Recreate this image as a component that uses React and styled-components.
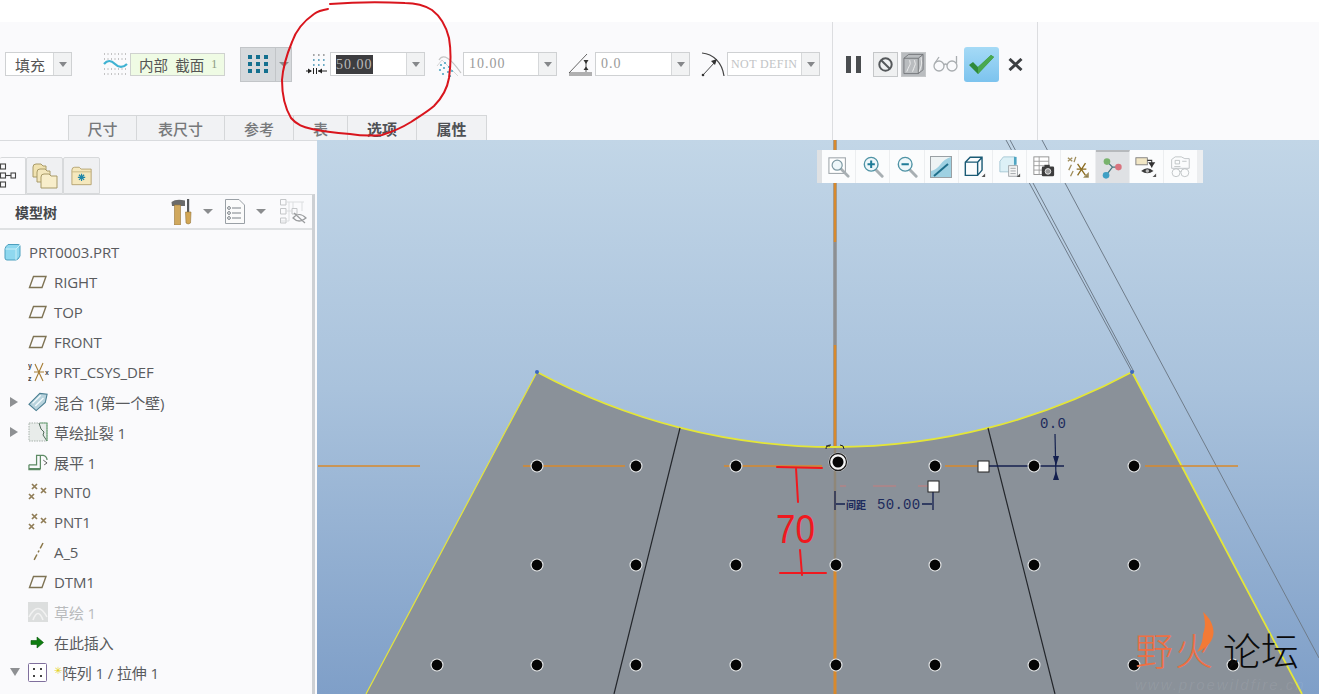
import { createGlobalStyle, styled } from "styled-components";

const CJK = `"Noto Sans CJK SC", "Noto Sans", sans-serif`;
const UI = `"Open Sans", "Noto Sans CJK SC", sans-serif`;
const SERIF = `"Liberation Serif", "Noto Sans CJK SC", serif`;

const Global = createGlobalStyle`
  html, body { margin: 0; padding: 0; background: #fff; }
  body { width: 1319px; height: 694px; overflow: hidden; font-family: ${UI}; }
`;

export default function App() {
    return (
        <Page>
            <Global />
            <Ribbon>
                <RibbonMain>
                    <Controls>
                        <Combo $w={67}><ComboValue $cjk>填充</ComboValue><ComboArrow /></Combo>
                        <IconSlot $ml={31} $w={25}><WaveIcon /></IconSlot>
                        <SectionBox>内部 截面 <SectionNum>1</SectionNum></SectionBox>
                        <GridButton>
                            <GridMain><DotsIcon /></GridMain>
                            <GridDrop><Tri /></GridDrop>
                        </GridButton>
                        <IconSlot $ml={14} $w={22}><SpacingIcon /></IconSlot>
                        <Combo $w={95}><ComboValue><Selected>50.00</Selected></ComboValue><ComboArrow /></Combo>
                        <IconSlot $ml={12} $w={24}><DensityIcon /></IconSlot>
                        <Combo $w={94}><ComboValue>10.00</ComboValue><ComboArrow /></Combo>
                        <IconSlot $ml={11} $w={25}><AngleIcon /></IconSlot>
                        <Combo $w={95}><ComboValue>0.0</ComboValue><ComboArrow /></Combo>
                        <IconSlot $ml={11} $w={24}><RadiusIcon /></IconSlot>
                        <Combo $w={93}><ComboValue $faded>NOT DEFIN</ComboValue><ComboArrow /></Combo>
                    </Controls>
                    <Tabs>
                        <Tab $w={69}>尺寸</Tab>
                        <Tab $w={88}>表尺寸</Tab>
                        <Tab $w={69}>参考</Tab>
                        <Tab $w={54}>表</Tab>
                        <Tab $w={69} $strong>选项</Tab>
                        <Tab $w={70} $strong>属性</Tab>
                    </Tabs>
                </RibbonMain>
                <RibbonActions>
                    <Pause><PauseBar /><PauseBar /></Pause>
                    <ActionBox $ml={12}><StopIcon /></ActionBox>
                    <ActionBox $ml={3} $on><BoxHatchIcon /></ActionBox>
                    <IconSlot $ml={7} $w={25}><GlassesIcon /></IconSlot>
                    <OkButton><CheckIcon /></OkButton>
                    <IconSlot $ml={9} $w={15}><CrossIcon /></IconSlot>
                </RibbonActions>
            </Ribbon>

            <Main>
                <Sidebar>
                    <SideTabs>
                        <SideTab $on $w={26}><TreeTabIcon /></SideTab>
                        <SideTab $w={37}><FoldersIcon /></SideTab>
                        <SideTab $w={37}><FolderStarIcon /></SideTab>
                    </SideTabs>
                    <Panel>
                        <PanelHead>
                            <PanelTitle>模型树</PanelTitle>
                            <PanelTools>
                                <ToolsIcon />
                                <Tri $ml={11} />
                                <ListIcon />
                                <Tri $ml={11} />
                                <TreeEyeIcon />
                            </PanelTools>
                        </PanelHead>
                        <Tree>
                            {treeRows.map((row, i) => (
                                <TreeRow key={i} $root={row.root}>
                                    {!row.root && (
                                        <Twist>{row.twist === "right" ? <TwistRight /> : row.twist === "down" ? <TwistDown /> : null}</Twist>
                                    )}
                                    <RowIcon $root={row.root}>{row.icon}</RowIcon>
                                    <RowLabel $muted={row.muted}>{row.star && <StarMark>✳</StarMark>}{row.label}</RowLabel>
                                </TreeRow>
                            ))}
                        </Tree>
                    </Panel>
                </Sidebar>

                <Viewport>
                    <Drawing />
                    <FloatBar>
                        <Grip />
                        <FloatBtn><RefitIcon /></FloatBtn>
                        <FloatBtn><ZoomIcon plus /></FloatBtn>
                        <FloatBtn><ZoomIcon /></FloatBtn>
                        <FloatBtn><RepaintIcon /></FloatBtn>
                        <FloatBtn><CubeIcon /></FloatBtn>
                        <FloatBtn><ViewMgrIcon /></FloatBtn>
                        <FloatBtn><SnapshotIcon /></FloatBtn>
                        <FloatBtn><DatumIcon /></FloatBtn>
                        <FloatBtn $on><NodesIcon /></FloatBtn>
                        <FloatBtn><AnnotIcon /></FloatBtn>
                        <FloatBtn><FadedPartIcon /></FloatBtn>
                    </FloatBar>
                    <Watermark>
                        <WmOrange>野火</WmOrange>
                        <FlameIcon />
                        <WmBlack>论坛</WmBlack>
                        <WmUrl>www.proewildfire.cn</WmUrl>
                    </Watermark>
                </Viewport>
            </Main>

            <InkLayer viewBox="0 0 1319 694">
                <path d="M328 9 C322 10 318 11 314 14 C304 21 296 30 292 42 C287 54 283 66 282 80 C282 95 285 108 291 118 C297 125 303 127 312 129 C325 132 337 133 350 134 C362 136 372 136 382 135 C395 131 403 127 411 122 C420 116 427 112 434 106 C442 98 447 90 449 78 C451 64 451 50 449 38 C446 26 440 16 432 10 C424 5 415 3 405 3 C385 2 355 2 330 4" fill="none" stroke="#d9151d" strokeWidth="2" strokeLinecap="round" />
                <path d="M777 467 L822 468 M796 468 L798 502 M800 550 L802 575 M780 573 L826 573" fill="none" stroke="#f0191f" strokeWidth="2" strokeLinecap="round" />
                <InkText x="776" y="543" textLength="39" lengthAdjust="spacingAndGlyphs">70</InkText>
            </InkLayer>
        </Page>
    );
}

/* ---------- canvas ---------- */

const rows = [
    { y: 466, xs: [537, 636, 736, 935, 1034, 1134] },
    { y: 565, xs: [537, 636, 736, 836, 935, 1034, 1134] },
    { y: 665, xs: [437, 537, 636, 736, 836, 935, 1034, 1134, 1233] },
];

function Drawing() {
    return (
        <svg width="1002" height="554" viewBox="317 140 1002 554" style={{ display: "block" }}>
            {/* construction lines behind the part */}
            <path d="M1006 140 L1132 372 M1010 140 L1134 372" stroke="#6f7c8a" strokeWidth="1" fill="none" />
            <path d="M1042 140 L1319 658" stroke="#6f7c8a" strokeWidth="1" fill="none" />
            <path d="M835 140 V448" stroke="#8d8f92" strokeWidth="3.5" />
            <path d="M835 140 V242 M835 345 V448" stroke="#d8892c" strokeWidth="2.5" />

            {/* part */}
            <path d="M537 372 A627.5 627.5 0 0 0 1132 372 L1302 694 L366 694 Z" fill="#8a9199" />
            <path d="M366 694 L537 372" fill="none" stroke="#e6e63a" strokeWidth="1.2" />
            <path d="M537 372 A627.5 627.5 0 0 0 1132 372 L1302 694" fill="none" stroke="#e4e638" strokeWidth="1.8" />
            <circle cx="537" cy="372" r="2" fill="#3a68c0" />
            <circle cx="1132" cy="372" r="2" fill="#3a68c0" />

            <path d="M680 428 L614 694 M988 428 L1055 694" stroke="#23262b" strokeWidth="1.2" fill="none" />
            <path d="M835 448 V560" stroke="#8f8778" strokeWidth="2.5" />
            <path d="M835 570 V694" stroke="#d8892c" strokeWidth="3" />

            <path d="M318 466 H420 M523 466 H625 M724 466 H822 M945 466 H983 M1145 466 H1238" stroke="#d8892c" strokeWidth="1.6" fill="none" />
            <path d="M988 466 H1064" stroke="#14204f" strokeWidth="1.5" />

            {rows.map(r => r.xs.map(x => (
                <g key={`${x}-${r.y}`}>
                    <circle cx={x} cy={r.y} r="6.5" fill="#e9ebec" />
                    <circle cx={x} cy={r.y} r="5.4" fill="#050505" />
                </g>
            )))}

            {/* active point */}
            <circle cx="838" cy="462" r="9.5" fill="#f4f4f4" />
            <circle cx="838" cy="462" r="8.5" fill="none" stroke="#1b1b1b" strokeWidth="1.3" />
            <circle cx="838" cy="462" r="5.5" fill="#050505" />
            <path d="M826 449 Q826 445 831 445 M840 445 Q844 445 844 449 M826 446 H830" stroke="#222" strokeWidth="1" fill="none" />

            {/* dimensions */}
            <path d="M840 486 H846 M873 486 H896 M918 486 H928" stroke="#c77d7d" strokeWidth="1" fill="none" />
            <path d="M835 491 V510 M933 492 V510 M836 504 H845 M922 504 H932" stroke="#14204f" strokeWidth="1.3" fill="none" />
            <rect x="928" y="481" width="11" height="11" fill="#fff" stroke="#222" strokeWidth="1" />
            <rect x="978" y="461" width="11" height="11" fill="#fff" stroke="#222" strokeWidth="1" />
            <DimLabel x="846" y="509" $small>间距</DimLabel>
            <DimLabel x="877" y="509">50.00</DimLabel>
            <DimLabel x="1040" y="428">0.0</DimLabel>
            <path d="M1055 434 L1056 479" stroke="#14204f" strokeWidth="1.2" fill="none" />
            <path d="M1053 456 H1059 L1056 466 Z M1053 480 H1059 L1056 471 Z" fill="#14204f" />
        </svg>
    );
}

/* ---------- ribbon icons ---------- */

const WaveIcon = () => (
    <svg width="25" height="24" viewBox="0 0 25 24">
        <path d="M1 2h23M1 7h23M1 17h23M1 22h23" stroke="#8c8c8c" strokeWidth="1" strokeDasharray="1 2.5" />
        <path d="M1 12 Q6 6 12 12 T24 12" fill="none" stroke="#3fb2d2" strokeWidth="2.2" />
    </svg>
);

const DotsIcon = () => (
    <svg width="22" height="22" viewBox="0 0 22 22" fill="#14708f">
        {[2, 9, 16].map(y => [1, 9, 17].map(x => <rect key={`${x}${y}`} x={x} y={y} width="4" height="4" />))}
    </svg>
);

const SpacingIcon = () => (
    <svg width="24" height="22" viewBox="0 0 24 22">
        <path d="M8 2h15" stroke="#888" strokeWidth="1.4" strokeDasharray="1.6 3.4" />
        <path d="M8 7h15M8 12h15" stroke="#3d8fb0" strokeWidth="1.4" strokeDasharray="1.6 3.4" />
        <path d="M1 18h5M13 18h9" stroke="#222" strokeWidth="1" />
        <path d="M7 18l-4-2.6v5.2zM13 18l4-2.6v5.2z" fill="#222" />
        <path d="M8.5 15v6M11.5 15v6" stroke="#222" strokeWidth="1" />
    </svg>
);

const DensityIcon = () => (
    <svg width="26" height="26" viewBox="0 0 26 26">
        <path d="M3 9 Q9 -1 25 22" fill="none" stroke="#c4c4c4" strokeWidth="1.2" />
        <path d="M1 15 L6 9 L22 25" fill="none" stroke="#d6d6d6" strokeWidth="1" />
        {[[5, 14], [9, 12], [4, 19], [8, 17], [13, 16], [7, 23], [12, 21], [16, 20], [14, 25]].map(([x, y]) => (
            <circle key={`${x}${y}`} cx={x} cy={y} r="1.1" fill="#52a7c2" />
        ))}
    </svg>
);

const AngleIcon = () => (
    <svg width="25" height="24" viewBox="0 0 25 24">
        <path d="M1 21 L19 2 M1 21 H24" fill="none" stroke="#555" strokeWidth="0.9" />
        <path d="M1 23 H24" stroke="#555" strokeWidth="0.9" />
        <path d="M18 8 V20" stroke="#333" strokeWidth="0.8" />
        <path d="M15.5 8 h5 l-2.5 4 z M15.5 18 h5 l-2.5 -3.5 z" fill="#333" />
    </svg>
);

const RadiusIcon = () => (
    <svg width="24" height="25" viewBox="0 0 24 25">
        <path d="M1 1 C12 2 21 10 23 24" fill="none" stroke="#444" strokeWidth="1.2" />
        <path d="M2 23 L14 10" stroke="#333" strokeWidth="0.9" />
        <path d="M16 7 L10 9 L14 13 Z" fill="#333" />
        <circle cx="2" cy="23" r="1.3" fill="#333" />
    </svg>
);

const StopIcon = () => (
    <svg width="17" height="17" viewBox="0 0 17 17">
        <circle cx="8.5" cy="8.5" r="6.2" fill="none" stroke="#55585b" strokeWidth="2" />
        <path d="M4.2 4.2 L12.8 12.8" stroke="#55585b" strokeWidth="2" />
    </svg>
);

const BoxHatchIcon = () => (
    <svg width="24" height="24" viewBox="0 0 24 24" fill="none" stroke="#6f7174" strokeWidth="0.9">
        <path d="M2 6 L7 2 H22 V18 L17 22 H2 Z M2 6 H17 V22 M17 6 L22 2" />
        <path d="M5 20 C9 10 9 14 8 8 M11 20 C15 9 14 14 13 8 M18 20 C22 9 20 12 20 5" stroke="#f2f2f2" />
    </svg>
);

const GlassesIcon = () => (
    <svg width="25" height="18" viewBox="0 0 25 18" fill="none" stroke="#a9adb0" strokeWidth="1.3">
        <circle cx="6" cy="11" r="5" />
        <circle cx="19" cy="11" r="5" />
        <path d="M11 10 Q12.5 8 14 10 M2 8 L6 2 M23.5 8 V1" />
    </svg>
);

const CheckIcon = () => (
    <svg width="27" height="21" viewBox="0 0 27 21">
        <path d="M1 11 L5 8 L10 13 L23 1 L26 3 L10 20 Z" fill="#2f8a3b" />
        <path d="M10 13 L23 1 L26 3 L10 20 Z" fill="#4aa84f" />
    </svg>
);

const CrossIcon = () => (
    <svg width="15" height="13" viewBox="0 0 15 13">
        <path d="M1.5 1 L13.5 12 M13.5 1 L1.5 12" stroke="#3c3f42" strokeWidth="3" />
    </svg>
);

/* ---------- side panel icons ---------- */

const TreeTabIcon = () => (
    <svg width="19" height="26" viewBox="0 0 19 26" fill="none" stroke="#444" strokeWidth="1.1">
        <rect x="0.5" y="1" width="5" height="5" />
        <rect x="0.5" y="10" width="5" height="5" />
        <rect x="0.5" y="19" width="5" height="5" />
        <rect x="11" y="10" width="4.5" height="5" />
        <path d="M5.5 12.5 H11" />
    </svg>
);

const FoldersIcon = () => (
    <svg width="26" height="26" viewBox="0 0 26 26">
        <path d="M1 4 Q1 1 4 1 H9 L11 3 H14 V14 H1 Z" fill="#f0e2b0" stroke="#a89a68" />
        <path d="M5 9 Q5 6 8 6 H13 L15 8 H18 V19 H5 Z" fill="#f3e7bd" stroke="#a89a68" />
        <path d="M9 14 Q9 11 12 11 H17 L19 13 H25 V25 H9 Z" fill="#f8eecb" stroke="#a89a68" />
    </svg>
);

const FolderStarIcon = () => (
    <svg width="22" height="21" viewBox="0 0 24 22">
        <path d="M1 5 Q1 2 4 2 H9 L11 4 H22 V21 H1 Z" fill="#f5e8bd" stroke="#b3a270" />
        <path d="M1 7 H22" stroke="#c7b783" />
        <path d="M11.5 9 V17 M7.5 13 H15.5 M8.7 10.2 L14.3 15.8 M14.3 10.2 L8.7 15.8" stroke="#1f86a8" strokeWidth="1.3" />
    </svg>
);

const ToolsIcon = () => (
    <svg width="21" height="26" viewBox="0 0 21 26" style={{ flexShrink: 0 }}>
        <path d="M0.5 3 Q5 -0.5 14 1.5 V7 H1 Z" fill="#6a6a6a" />
        <rect x="3.5" y="6" width="6" height="20" fill="#d0a85e" stroke="#96763a" strokeWidth="0.6" />
        <rect x="16" y="0" width="2.2" height="13" fill="#55585b" />
        <path d="M14.5 13 H20 L19.5 24 Q17 26 15 24 Z" fill="#d2a654" stroke="#96763a" strokeWidth="0.6" />
    </svg>
);

const ListIcon = () => (
    <svg width="20" height="25" viewBox="0 0 20 25" style={{ marginLeft: 12, flexShrink: 0 }}>
        <path d="M0.5 0.5 H14 L19.5 6 V24.5 H0.5 Z" fill="#fbfbfb" stroke="#9aa0a6" />
        <path d="M7 9 H16 M7 14 H16 M7 19 H16" stroke="#7c8288" strokeWidth="1.2" />
        <circle cx="4" cy="9" r="1.4" fill="none" stroke="#7c8288" />
        <circle cx="4" cy="14" r="1.4" fill="none" stroke="#7c8288" />
        <circle cx="4" cy="19" r="1.4" fill="none" stroke="#7c8288" />
    </svg>
);

const TreeEyeIcon = () => (
    <svg width="27" height="25" viewBox="0 0 27 25" fill="none" style={{ marginLeft: 14, flexShrink: 0 }}>
        <path d="M0.5 0.5 H6 V6 H0.5 Z M0.5 9.5 H6 V15 H0.5 Z M0.5 19 H6 V24 H0.5 Z M12 9.5 H17 V15 H12 Z" stroke="#c4c6c8" />
        <path d="M6 3 H24 M6 12 H12 M9 3 V22 H1 M13 3 V9 M22 3 V12" stroke="#dcdee0" />
        <path d="M13 19 Q19 12 26 19 Q19 25 13 19 Z M14 14 L25 24" stroke="#9a9c9e" strokeWidth="1.2" />
    </svg>
);

const PlaneIcon = () => (
    <svg width="20" height="14" viewBox="0 0 20 14">
        <path d="M5.5 1.5 H18 L14 12.5 H1.5 Z" fill="none" stroke="#7e7354" strokeWidth="1.4" />
    </svg>
);

const CubeTreeIcon = () => (
    <svg width="17" height="18" viewBox="0 0 17 18">
        <path d="M1 6 Q1 4 4 1.5 H14 Q16 1.5 16 3 V13 Q14 17 12 17 H3 Q1 17 1 15 Z" fill="#8fd8ef" stroke="#4d9fbe" />
        <path d="M1.5 6 H12 V17 M12 6 L16 2" stroke="#c9eff8" fill="none" />
    </svg>
);

const CsysIcon = () => (
    <svg width="21" height="22" viewBox="0 0 21 22" fill="none">
        <path d="M7 3 L15 20 M15 2 L7 20 M6 11 H16" stroke="#a57c33" strokeWidth="1.1" />
        <TinyLabel x="0" y="7">y</TinyLabel>
        <TinyLabel x="0" y="20">z</TinyLabel>
        <TinyLabel x="17" y="14">x</TinyLabel>
    </svg>
);

const BlendIcon = () => (
    <svg width="20" height="20" viewBox="0 0 22 21">
        <path d="M1 13 L13 1 L21 2 L19 11 L9 20 Z" fill="#b8d3dd" stroke="#4b7f92" strokeWidth="1.2" />
        <path d="M5 12 L14 3 M8 15 L17 6" stroke="#f2fafc" strokeWidth="1.5" />
    </svg>
);

const SketchCutIcon = () => (
    <svg width="20" height="20" viewBox="0 0 20 20">
        <path d="M1 1 H19 V19 H1 Z" fill="#e8ecea" stroke="#a8b2ac" strokeDasharray="1.5 1" />
        <path d="M11 1 L13 7 L16 10 L15 13 L19 19" fill="none" stroke="#506a5a" strokeWidth="1" />
        <path d="M12 1 H19 V19" fill="none" stroke="#6ea57a" strokeWidth="1.2" />
    </svg>
);

const FlatIcon = () => (
    <svg width="20" height="18" viewBox="0 0 21 18" fill="none">
        <path d="M1 16 H13 V2 H16 Q20 3 20 7 M1 12 H9 V2 H13" stroke="#5d8a64" strokeWidth="1.3" />
        <path d="M1 12 V17 H13" stroke="#5d8a64" strokeWidth="1.3" />
        <path d="M16 7 L20 10 L17 12" stroke="#555" />
    </svg>
);

const PointsIcon = () => (
    <svg width="20" height="20" viewBox="0 0 20 20" stroke="#907d57" strokeWidth="1.7">
        <path d="M4 2 L9 7 M9 2 L4 7 M13 6 L18 11 M18 6 L13 11 M1 12 L6 17 M6 12 L1 17" />
    </svg>
);

const AxisIcon = () => (
    <svg width="20" height="21" viewBox="0 0 20 21">
        <path d="M15 1 L5 20" stroke="#8a7749" strokeWidth="1.5" strokeDasharray="6 2.5 2 2.5" />
    </svg>
);

const SketchIcon = () => (
    <svg width="20" height="20" viewBox="0 0 20 20">
        <rect width="20" height="20" fill="#dcdede" />
        <path d="M1 15 Q10 -2 19 15 M5 18 Q10 5 15 18" fill="none" stroke="#f2f2f2" strokeWidth="1.6" />
    </svg>
);

const InsertIcon = () => (
    <svg width="16" height="13" viewBox="0 0 16 13">
        <path d="M3 4.5 H9 V1 L15.5 6.5 L9 12 V8.5 H3 Z" fill="#0f7d11" stroke="#0a5b0c" strokeWidth="0.6" />
    </svg>
);

const PatternIcon = () => (
    <svg width="19" height="19" viewBox="0 0 19 19">
        <rect x="0.5" y="0.5" width="18" height="18" rx="1" fill="#fff" stroke="#7f6f9d" />
        {[[5, 5], [12, 5], [5, 12], [12, 12]].map(([x, y]) => <rect key={`${x}${y}`} x={x} y={y} width="2" height="2" fill="#454545" />)}
    </svg>
);

const treeRows = [
    { label: "PRT0003.PRT", icon: <CubeTreeIcon />, root: true },
    { label: "RIGHT", icon: <PlaneIcon /> },
    { label: "TOP", icon: <PlaneIcon /> },
    { label: "FRONT", icon: <PlaneIcon /> },
    { label: "PRT_CSYS_DEF", icon: <CsysIcon /> },
    { label: "混合 1(第一个壁)", icon: <BlendIcon />, twist: "right" },
    { label: "草绘扯裂 1", icon: <SketchCutIcon />, twist: "right" },
    { label: "展平 1", icon: <FlatIcon /> },
    { label: "PNT0", icon: <PointsIcon /> },
    { label: "PNT1", icon: <PointsIcon /> },
    { label: "A_5", icon: <AxisIcon /> },
    { label: "DTM1", icon: <PlaneIcon /> },
    { label: "草绘 1", icon: <SketchIcon />, muted: true },
    { label: "在此插入", icon: <InsertIcon /> },
    { label: "阵列 1 / 拉伸 1", icon: <PatternIcon />, twist: "down", star: true },
];

/* ---------- floating toolbar icons ---------- */

const Lens = ({ children, stroke = "#4f93a5" }) => (
    <svg viewBox="0 0 24 24">
        <path d="M14 14 L22 22" stroke="#a8afb3" strokeWidth="3.2" strokeLinecap="round" />
        <circle cx="10" cy="9" r="7.5" fill="#eef7fa" stroke={stroke} strokeWidth="1.5" />
        {children}
    </svg>
);

const RefitIcon = () => (
    <svg viewBox="0 0 24 24">
        <rect x="1" y="2" width="18" height="17" fill="#fff" stroke="#a2a9ae" strokeWidth="1.2" />
        <path d="M14 14 L22 22" stroke="#a8afb3" strokeWidth="3" strokeLinecap="round" />
        <circle cx="10" cy="10" r="5.5" fill="#eef7fa" stroke="#7d99a3" strokeWidth="1.3" />
    </svg>
);

const ZoomIcon = ({ plus }) => (
    <Lens>
        <path d={plus ? "M6 9 H14 M10 5 V13" : "M6 9 H14"} stroke="#1f7c98" strokeWidth="2.2" />
    </Lens>
);

const RepaintIcon = () => (
    <svg viewBox="0 0 22 22">
        <rect x="0.5" y="0.5" width="21" height="21" fill="#9fd1e2" stroke="#9aa0a4" />
        <path d="M1 1 H21 Q14 3 10 9 Q6 14 1 15 Z" fill="#eef3f4" />
        <path d="M4 20 L18 8" stroke="#1f6f8b" strokeWidth="2" />
    </svg>
);

const Corner = () => <path d="M24 24 H20 L24 20 Z" fill="#555" />;

const CubeIcon = () => (
    <svg viewBox="0 0 25 25" fill="none">
        <path d="M1.5 7 L7 1.5 H20.5 V16 L15.5 22 H1.5 Z M1.5 7 H15.5 V22 M15.5 7 L20.5 1.5" stroke="#1a5a75" strokeWidth="1.6" />
        <Corner />
    </svg>
);

const ViewMgrIcon = () => (
    <svg viewBox="0 0 25 25">
        <path d="M1 6 L5 1 H18 V18 H1 Z" fill="#dcf0f6" stroke="#a0c4d2" />
        <rect x="17" y="1" width="3" height="9" fill="#4fa5c2" />
        <rect x="11" y="11" width="10" height="12" fill="#f6f6f6" stroke="#9a9fa3" />
        <path d="M13 14 H19 M13 17 H19 M13 20 H19" stroke="#9a9fa3" />
        <Corner />
    </svg>
);

const SnapshotIcon = () => (
    <svg viewBox="0 0 25 25">
        <rect x="1" y="1" width="17" height="20" fill="#fff" stroke="#8b8b8b" />
        <path d="M1 6 H18 M1 11 H18 M1 16 H12 M7 1 V21" stroke="#9a9a9a" />
        <rect x="10" y="12" width="14" height="11" rx="1.5" fill="#3d3d3d" />
        <rect x="13" y="10" width="6" height="3" fill="#3d3d3d" />
        <circle cx="17" cy="17.5" r="3.2" fill="#9a9a9a" stroke="#eee" />
    </svg>
);

const DatumIcon = () => (
    <svg viewBox="0 0 25 25" stroke="#a08e5c" strokeWidth="1.5" fill="none">
        <path d="M1 2 L6 6 M6 2 L1 6 M10 1 L8 7 M2 16 L5 10 M4 23 L7 17" />
        <path d="M11 15 H22 M12 9 L21 22 M21 8 L12 22" stroke="#8c6d22" />
        <Corner />
    </svg>
);

const NodesIcon = () => (
    <svg viewBox="0 0 23 24">
        <path d="M6 5 L12 11 L5 20 M12 11 H18" stroke="#49777f" strokeWidth="1.4" fill="none" />
        <circle cx="6" cy="5" r="3.6" fill="#79b36d" />
        <circle cx="18.5" cy="11" r="3.6" fill="#d9737e" />
        <circle cx="5" cy="20" r="3.6" fill="#3fa0c4" />
    </svg>
);

const AnnotIcon = () => (
    <svg viewBox="0 0 25 25">
        <rect x="1" y="2" width="13" height="8" fill="#f2e7c5" stroke="#7b7b7b" />
        <path d="M14 5 H19 V13" stroke="#333" strokeWidth="1.2" fill="none" />
        <path d="M15 7 H23 L19 13 Z" fill="#333" />
        <path d="M7 17 Q14 11 21 17 Q14 22 7 17 Z" fill="#3a3a3a" />
        <circle cx="14" cy="17" r="2" fill="#bbb" />
        <Corner />
    </svg>
);

const FadedPartIcon = () => (
    <svg viewBox="0 0 25 25" fill="none" stroke="#bcc0c3" strokeWidth="1">
        <path d="M3 4 L7 1 H14 L18 3 H23 V14 H3 Z M7 5 H12 V9 H7 Z M15 6 H20 M6 12 H13" />
        <circle cx="8" cy="19" r="4.5" />
        <circle cx="18" cy="19" r="4.5" />
        <path d="M12.5 18 Q13 16.5 13.5 18" />
    </svg>
);

const FlameIcon = () => (
    <FlameSvg width="20" height="42" viewBox="0 0 20 42">
        <path d="M6 0 C18 10 24 30 0 40 C4 34 6 28 6 22 C9 15 8 7 6 0 Z" fill="#f47a35" />
    </FlameSvg>
);

/* ---------- page ---------- */

const Page = styled.div`
  position: relative;
  width: 1319px;
  height: 694px;
  overflow: hidden;
  background: #fff;
`;

const Ribbon = styled.div`
  margin-top: 22px;
  height: 118px;
  display: flex;
  background: #fafafc;
`;

const RibbonMain = styled.div`
  width: 832px;
  display: flex;
  flex-direction: column;
  justify-content: space-between;
  border-right: 1px solid #dcdde0;
`;

const Controls = styled.div`
  height: 84px;
  padding-left: 5px;
  display: flex;
  align-items: center;
`;

const Combo = styled.div`
  width: ${p => p.$w}px;
  height: 24px;
  box-sizing: border-box;
  display: flex;
  background: #fff;
  border: 1px solid #cfd1d3;
  flex-shrink: 0;
`;

const ComboValue = styled.div`
  flex: 1;
  min-width: 0;
  padding-left: ${p => (p.$cjk ? 9 : p.$faded ? 3 : 5)}px;
  display: flex;
  align-items: center;
  white-space: nowrap;
  overflow: hidden;
  font-family: ${p => (p.$cjk ? CJK : SERIF)};
  font-size: ${p => (p.$cjk ? 15 : p.$faded ? 12 : 14)}px;
  letter-spacing: ${p => (p.$faded ? 0.4 : p.$cjk ? 0 : 1)}px;
  color: ${p => (p.$faded ? "#c2c4c6" : p.$cjk ? "#555" : "#9a9a9a")};
`;

const Selected = styled.span`
  background: #3d3d40;
  color: #b9b9b9;
  padding: 2px 0;
  line-height: 15px;
`;

const Tri = styled.span`
  display: block;
  flex-shrink: 0;
  width: 0;
  height: 0;
  margin-left: ${p => p.$ml || 0}px;
  border-left: 5px solid transparent;
  border-right: 5px solid transparent;
  border-top: 5px solid #8a8c8e;
`;

const ComboArrow = styled.div`
  width: 17px;
  flex-shrink: 0;
  display: flex;
  align-items: center;
  justify-content: center;
  background: #f1f2f3;
  border-left: 1px solid #d6d8da;
  &::after {
    content: "";
    border-left: 4px solid transparent;
    border-right: 4px solid transparent;
    border-top: 5px solid #85878a;
  }
`;

const IconSlot = styled.div`
  width: ${p => p.$w}px;
  margin-left: ${p => p.$ml || 0}px;
  margin-right: 2px;
  display: flex;
  justify-content: center;
  flex-shrink: 0;
  svg { flex-shrink: 0; }
`;

const SectionBox = styled.div`
  width: 95px;
  height: 23px;
  box-sizing: border-box;
  flex-shrink: 0;
  padding-left: 8px;
  display: flex;
  align-items: center;
  gap: 7px;
  word-spacing: 4px;
  white-space: nowrap;
  background: #effbe4;
  border: 1px solid #cfd2cf;
  font-family: ${CJK};
  font-size: 14.5px;
  color: #555;
`;

const SectionNum = styled.span`
  font-family: ${SERIF};
  font-size: 12px;
  color: #8b9a7e;
`;

const GridButton = styled.div`
  margin-left: 15px;
  width: 52px;
  height: 35px;
  box-sizing: border-box;
  display: flex;
  flex-shrink: 0;
  background: #d6d9dc;
  border: 1px solid #c2c5c8;
`;

const GridMain = styled.div`
  width: 34px;
  display: flex;
  align-items: center;
  justify-content: center;
`;

const GridDrop = styled.div`
  flex: 1;
  display: flex;
  align-items: center;
  justify-content: center;
  border-left: 1px solid #c2c5c8;
`;

const Tabs = styled.div`
  display: flex;
  padding-left: 68px;
`;

const Tab = styled.div`
  width: ${p => p.$w}px;
  height: 25px;
  box-sizing: border-box;
  display: flex;
  align-items: center;
  justify-content: center;
  background: #f1f2f4;
  border: 1px solid #d5d7d9;
  border-bottom: 0;
  border-left-width: 0;
  &:first-child { border-left-width: 1px; }
  font-family: ${CJK};
  font-size: 15px;
  font-weight: ${p => (p.$strong ? 700 : 500)};
  color: ${p => (p.$strong ? "#4f5154" : "#77797b")};
`;

const RibbonActions = styled.div`
  width: 205px;
  height: 84px;
  padding-left: 13px;
  display: flex;
  align-items: center;
  box-sizing: border-box;
  position: relative;
  &::after {
    content: "";
    position: absolute;
    right: 0;
    top: 0;
    height: 118px;
    border-right: 1px solid #dcdde0;
  }
`;

const Pause = styled.div`
  display: flex;
  gap: 5px;
  flex-shrink: 0;
`;

const PauseBar = styled.span`
  width: 5px;
  height: 17px;
  background: #4a4d50;
`;

const ActionBox = styled.div`
  width: 25px;
  height: 25px;
  box-sizing: border-box;
  margin-left: ${p => p.$ml}px;
  flex-shrink: 0;
  display: flex;
  align-items: center;
  justify-content: center;
  background: ${p => (p.$on ? "#b9bcbf" : "#eff0f1")};
  border: 1px solid #c5c7c9;
`;

const OkButton = styled.div`
  width: 35px;
  height: 35px;
  margin-left: 4px;
  flex-shrink: 0;
  display: flex;
  align-items: center;
  justify-content: center;
  border-radius: 3px;
  background: linear-gradient(#a5daf6, #7cc3ee);
`;

const Main = styled.div`
  display: flex;
  height: 554px;
  background: #fafafc;
`;

const Sidebar = styled.aside`
  width: 317px;
  flex-shrink: 0;
  display: flex;
  flex-direction: column;
  overflow: hidden;
  border-top: 1px solid #d9dbde;
  box-sizing: border-box;
`;

const SideTabs = styled.div`
  margin-top: 16px;
  height: 37px;
  display: flex;
  flex-shrink: 0;
`;

const SideTab = styled.div`
  width: ${p => p.$w}px;
  box-sizing: border-box;
  display: flex;
  align-items: center;
  justify-content: ${p => (p.$on ? "flex-start" : "center")};
  background: ${p => (p.$on ? "#fafafc" : "#eff0f2")};
  border: 1px solid #d7d9db;
  border-left-width: ${p => (p.$on ? 0 : 1)}px;
  border-bottom-width: ${p => (p.$on ? 0 : 1)}px;
  border-radius: 2px 2px 0 0;
`;

const Panel = styled.div`
  width: 315px;
  flex: 1;
  min-height: 0;
  box-sizing: border-box;
  border-right: 3px solid #cdd0d4;
  border-top: 1px solid #d7d9db;
`;

const PanelHead = styled.div`
  height: 35px;
  box-sizing: border-box;
  padding: 0 5px 0 15px;
  display: flex;
  align-items: center;
  justify-content: space-between;
  border-bottom: 2px solid #dfe1e3;
`;

const PanelTitle = styled.div`
  font-family: ${CJK};
  font-size: 14px;
  font-weight: 700;
  color: #45474a;
`;

const PanelTools = styled.div`
  display: flex;
  align-items: center;
`;

const Tree = styled.div`
  padding-top: 7px;
  display: flex;
  flex-direction: column;
`;

const TreeRow = styled.div`
  height: 30px;
  flex-shrink: 0;
  display: flex;
  align-items: center;
  padding-left: ${p => (p.$root ? 4 : 8)}px;
`;

const Twist = styled.div`
  width: 20px;
  flex-shrink: 0;
  display: flex;
  align-items: center;
  padding-left: 2px;
  box-sizing: border-box;
`;

const TwistRight = styled.span`
  border-top: 5px solid transparent;
  border-bottom: 5px solid transparent;
  border-left: 8px solid #8e9093;
`;

const TwistDown = styled.span`
  border-left: 5px solid transparent;
  border-right: 5px solid transparent;
  border-top: 8px solid #8e9093;
`;

const RowIcon = styled.div`
  width: ${p => (p.$root ? 18 : 20)}px;
  margin-right: ${p => (p.$root ? 7 : 6)}px;
  display: flex;
  align-items: center;
  flex-shrink: 0;
  svg { flex-shrink: 0; }
`;

const RowLabel = styled.div`
  font-family: ${UI};
  font-size: 15px;
  letter-spacing: -0.1px;
  white-space: nowrap;
  color: ${p => (p.$muted ? "#b9bbbd" : "#595b5e")};
`;

const StarMark = styled.span`
  display: inline-block;
  font-size: 10px;
  color: #e4d21c;
  vertical-align: 5px;
`;

const TinyLabel = styled.text`
  font-family: "Liberation Sans", sans-serif;
  font-size: 7px;
  font-weight: 700;
  fill: #444;
  stroke: none;
`;

const Viewport = styled.div`
  position: relative;
  flex: 1;
  min-width: 0;
  overflow: hidden;
  background: linear-gradient(#c2d6e7 0%, #a9c2dc 45%, #7f9fc8 100%);
`;

const DimLabel = styled.text`
  font-family: ${p => (p.$small ? CJK : `"Liberation Mono", monospace`)};
  font-size: ${p => (p.$small ? 10 : 14)}px;
  font-weight: ${p => (p.$small ? 700 : 400)};
  letter-spacing: ${p => (p.$small ? 0 : 0.3)}px;
  fill: #1c2a5c;
`;

const FloatBar = styled.div`
  position: absolute;
  left: 500px;
  top: 10px;
  height: 33px;
  display: flex;
  padding-right: 5px;
  background: #eceef0;
`;

const Grip = styled.div`
  width: 5px;
  background: #dfe1e3;
`;

const FloatBtn = styled.div`
  width: 34.2px;
  display: flex;
  align-items: center;
  justify-content: center;
  box-sizing: border-box;
  background: ${p => (p.$on ? "#dfe1e4" : "#fbfcfd")};
  border-top: ${p => (p.$on ? "2px solid #b6b9bc" : "0")};
  border-right: 1px solid #eceef0;
  svg { width: 22px; height: 22px; }
`;

const Watermark = styled.div`
  position: absolute;
  left: 818px;
  top: 475px;
  width: 180px;
  height: 68px;
  display: flex;
  align-items: center;
  font-family: ${CJK};
  font-size: 38px;
  font-weight: 300;
  line-height: 1;
`;

const WmOrange = styled.span`
  color: #ee6f43;
  letter-spacing: 2px;
`;

const WmBlack = styled.span`
  color: #0b0b0b;
  margin-left: 8px;
`;

const WmUrl = styled.span`
  position: absolute;
  left: 0;
  top: 62px;
  white-space: nowrap;
  font-family: "Liberation Sans", sans-serif;
  font-size: 15px;
  line-height: 15px;
  font-style: italic;
  letter-spacing: 2px;
  color: rgba(255, 255, 255, 0.08);
`;

const FlameSvg = styled.svg`
  position: absolute;
  left: 62px;
  top: -3px;
`;

const InkLayer = styled.svg`
  position: absolute;
  left: 0;
  top: 0;
  width: 1319px;
  height: 694px;
  pointer-events: none;
`;

const InkText = styled.text`
  font-family: "Liberation Sans", sans-serif;
  font-size: 40px;
  fill: #f0191f;
`;
